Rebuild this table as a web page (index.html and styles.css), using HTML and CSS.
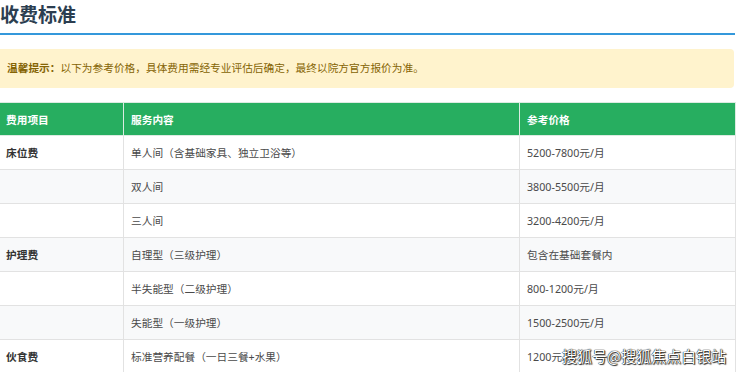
FILE: index.html
```html
<!DOCTYPE html>
<html lang="zh">
<head>
<meta charset="utf-8">
<title>收费标准</title>
<link rel="stylesheet" href="styles.css">
</head>
<body>
<div class="page">
  <h2 class="title">收费标准</h2>
  <div class="notice"><strong>温馨提示：</strong>以下为参考价格，具体费用需经专业评估后确定，最终以院方官方报价为准。</div>
  <table class="fees">
    <colgroup>
      <col class="c1"><col class="c2"><col class="c3">
    </colgroup>
    <thead>
      <tr><th>费用项目</th><th>服务内容</th><th>参考价格</th></tr>
    </thead>
    <tbody>
      <tr><td class="cat">床位费</td><td>单人间（含基础家具、独立卫浴等）</td><td>5200-7800元/月</td></tr>
      <tr><td class="cat"></td><td>双人间</td><td>3800-5500元/月</td></tr>
      <tr><td class="cat"></td><td>三人间</td><td>3200-4200元/月</td></tr>
      <tr><td class="cat">护理费</td><td>自理型（三级护理）</td><td>包含在基础套餐内</td></tr>
      <tr><td class="cat"></td><td>半失能型（二级护理）</td><td>800-1200元/月</td></tr>
      <tr><td class="cat"></td><td>失能型（一级护理）</td><td>1500-2500元/月</td></tr>
      <tr><td class="cat">伙食费</td><td>标准营养配餐（一日三餐+水果）</td><td>1200元/月</td></tr>
    </tbody>
  </table>
</div>
<div class="watermark">搜狐号@搜狐焦点白银站</div>
</body>
</html>
```

FILE: styles.css
```css
html, body {
  margin: 0;
  padding: 0;
  background: #fff;
  overflow: hidden;
}
body {
  font-family: "Noto Sans", "Noto Sans CJK SC", sans-serif;
  width: 740px;
  height: 372px;
  position: relative;
}
.page {
  margin-left: -2px;
  width: 737px;
}
.title {
  margin: 0;
  padding-left: 2px;
  font-size: 19px;
  font-weight: bold;
  line-height: 28px;
  padding-bottom: 5px;
  color: #2c3e50;
  border-bottom: 2px solid #3498db;
  font-family: "Noto Sans CJK SC", sans-serif;
}
.notice {
  margin-top: 14px;
  margin-right: 1px;
  height: 39px;
  line-height: 39px;
  padding: 0 9px;
  background: #fff3cd;
  color: #856404;
  font-size: 10.7px;
  border-radius: 0 4px 4px 0;
}
.notice strong {
  font-weight: bold;
}
.fees {
  margin-top: 14px;
  width: 737px;
  table-layout: fixed;
  border-collapse: collapse;
  font-size: 10.7px;
}
.c1 { width: 125px; }
.c2 { width: 396px; }
.c3 { width: 216px; }
.fees th, .fees td {
  border: 1px solid #e2e2e2;
  padding: 0 7px;
  text-align: left;
  height: 33px;
  white-space: nowrap;
}
.fees th {
  background: #27ae60;
  color: #fff;
  font-weight: bold;
  height: 32px;
  border-color: #dcebe2;
}
.fees td {
  color: #4a4a4a;
}
.fees td.cat {
  font-weight: bold;
  color: #333;
}
.fees tbody tr:nth-child(even) td {
  background: #f8f9fa;
}
.watermark {
  position: absolute;
  left: 562px;
  top: 345px;
  font-family: "Noto Sans CJK SC", sans-serif;
  font-size: 15px;
  line-height: 22px;
  color: #fff;
  text-shadow: 0 0 1px #000, 0 0 1px #000, 1px 1px 1px #333;
}
```
